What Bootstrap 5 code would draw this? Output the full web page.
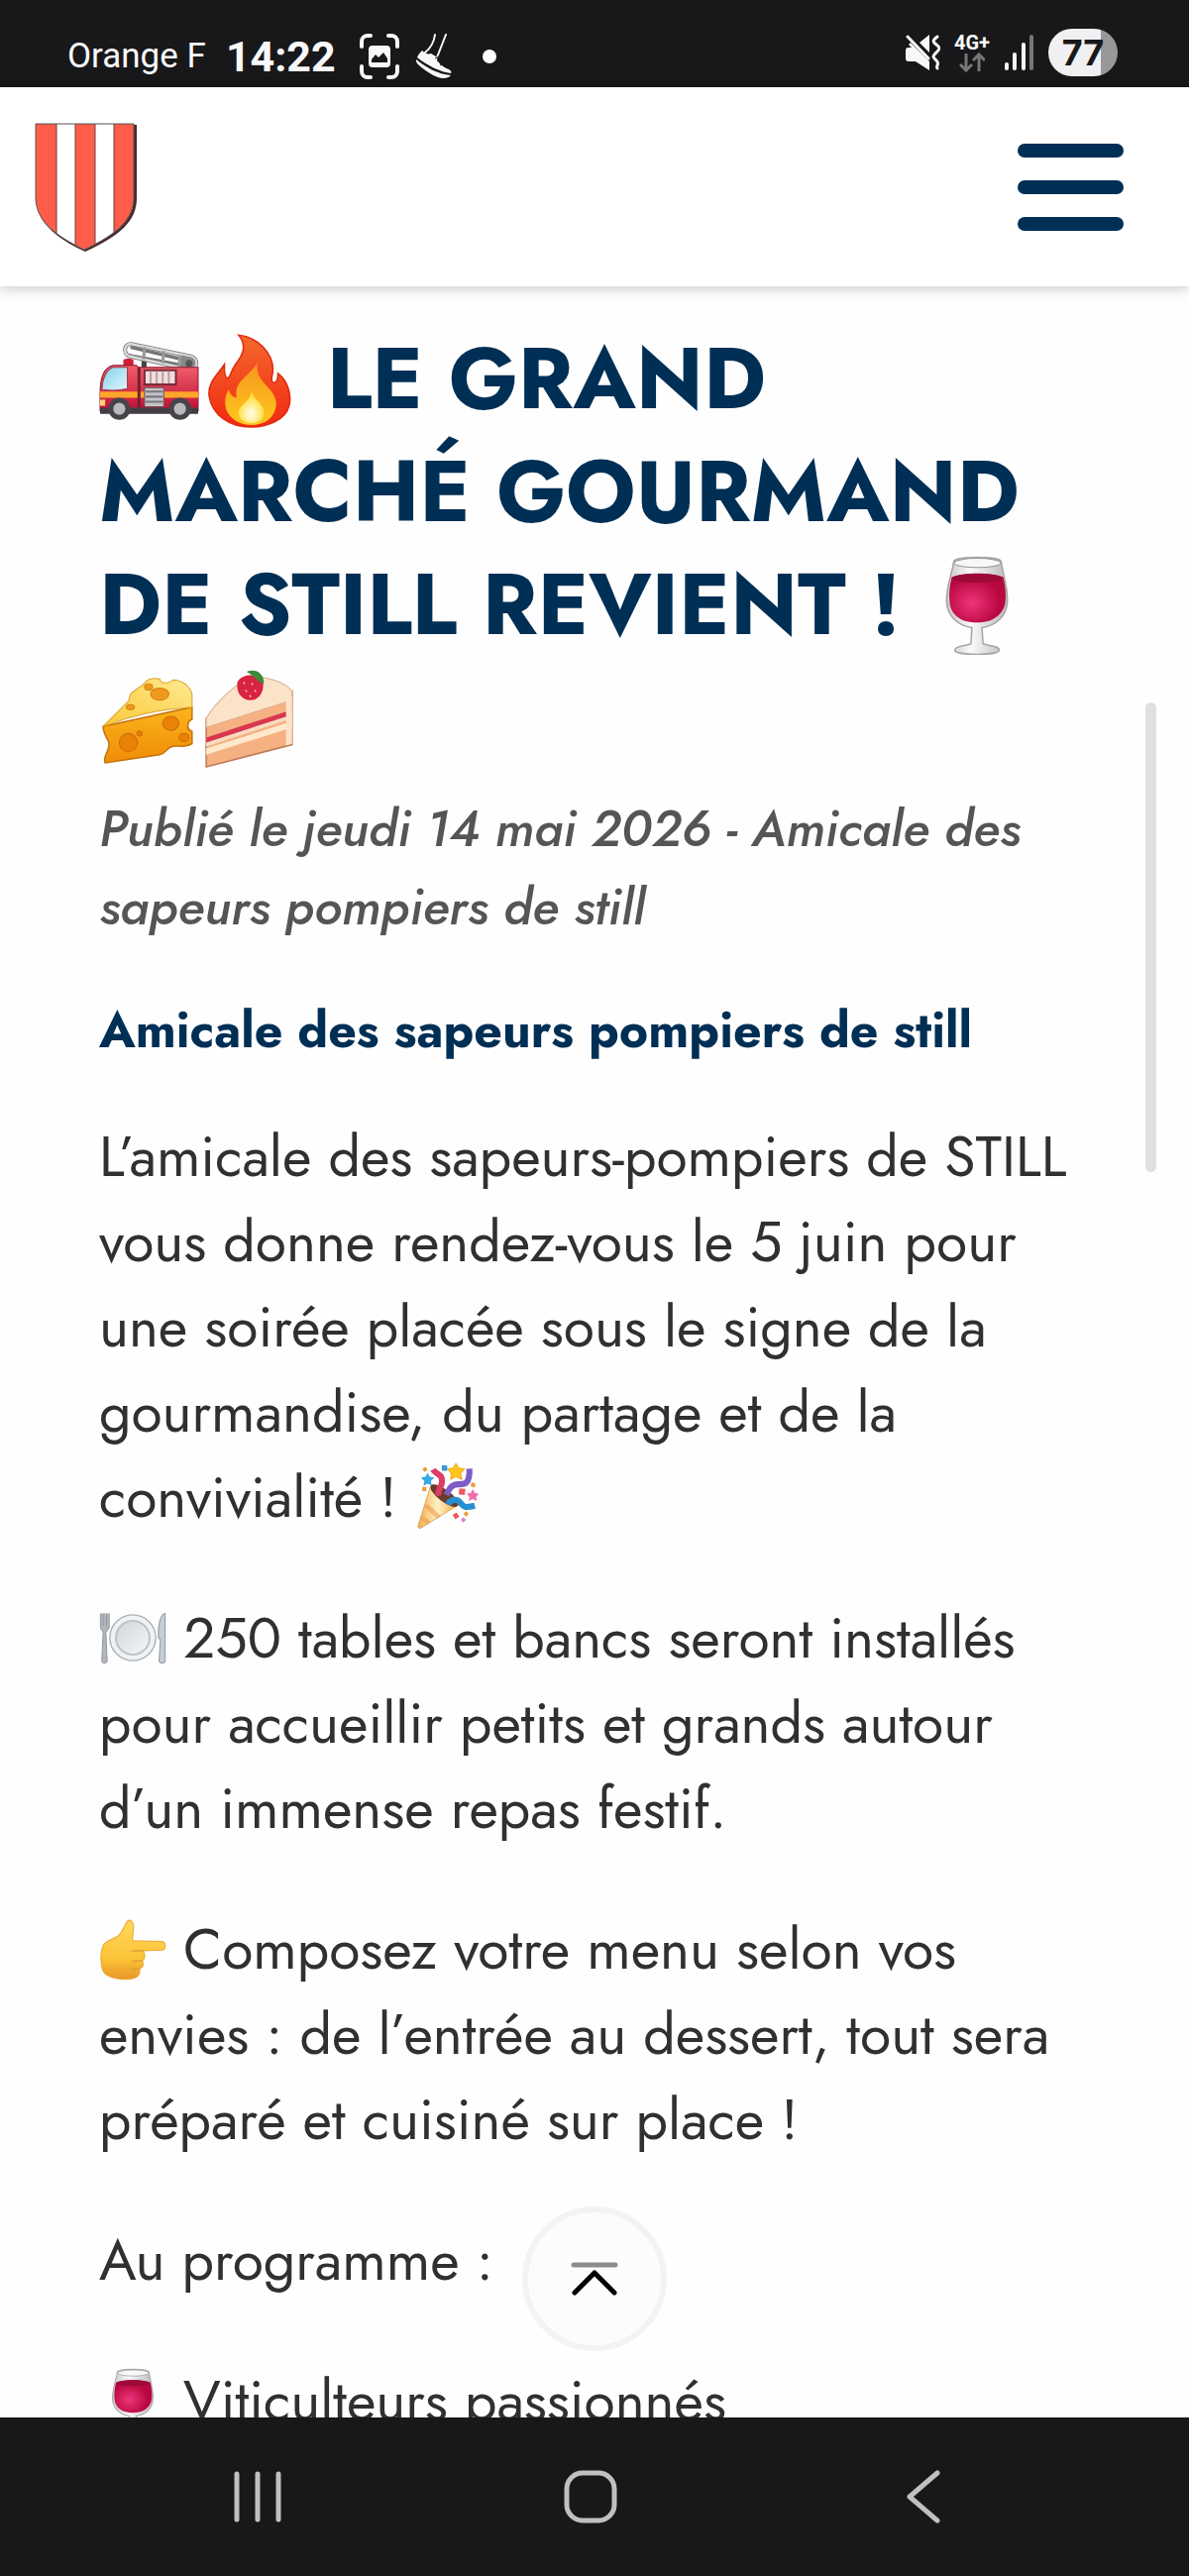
<!DOCTYPE html>
<html lang="fr">
<head>
<meta charset="utf-8">
<meta name="viewport" content="width=device-width, initial-scale=1">
<title>Le grand marché gourmand de Still revient</title>
<link href="https://cdn.jsdelivr.net/npm/bootstrap@5.3.0/dist/css/bootstrap.min.css" rel="stylesheet">
<style>
  :root { --navy: #002f55; --chrome: #18181a; }
  body { font-family: Jost, Lato, sans-serif; color: #303030; background: #fefefe; }
  svg { display: block; flex: none; }
  .status-bar { height: 88px; padding: 26px 72px 0 68px; background: var(--chrome); color: #f8f8fa; font-family: Roboto, sans-serif; }
  .status-bar .status-end { gap: 14px; }
  .carrier { font-size: 35px; line-height: 60px; }
  .clock { font-size: 43px; line-height: 60px; font-weight: 700; }
  .status-dot { width: 14px; height: 14px; margin-left: 30px; }
  .net-label { font: 700 20px/20px Roboto, sans-serif; }
  .battery { width: 70px; height: 48px; font: 700 36px/48px Inter, sans-serif; color: var(--chrome); background: linear-gradient(90deg, #f0f0f2 76%, #98989a 76%); }
  .site-header { height: 201px; padding: 0 66px 0 34px; box-shadow: 0 2px 12px rgba(0, 0, 0, .22); z-index: 2; }
  .burger { gap: 23px; width: 107px; }
  .burger span { height: 14px; border-radius: 7px; background: var(--navy); }
  .article { padding: 36px 100px 0; }
  .article h1 { font-size: 86px; line-height: 114px; font-weight: 700; color: var(--navy); margin-bottom: 16px; --emoji: 102px; --drop: -21px; }
  .article .meta { font-size: 51px; line-height: 79px; font-weight: 500; font-style: italic; color: #555; margin-bottom: 45px; }
  .article h2 { font-size: 50px; line-height: 79px; font-weight: 700; color: var(--navy); margin-bottom: 45px; }
  .article .body-text { font-size: 57px; line-height: 86px; margin-bottom: 56px; --emoji: 68px; --drop: -14px; }
  .emoji { display: inline-block; width: var(--emoji); height: var(--emoji); vertical-align: var(--drop); }
  .scroll-track { top: 420px; right: 33px; width: 11px; height: 474px; border-radius: 6px; background: #e0e0e0; }
  .to-top { bottom: 67px; width: 146px; height: 146px; border: 6px solid #f3f3f3; background: #fcfcfc; }
  .system-nav { height: 160px; padding-right: 8px; background: var(--chrome); }
  .system-nav button { width: 336px; }
</style>
<script src="https://cdn.jsdelivr.net/npm/bootstrap@5.3.0/dist/js/bootstrap.bundle.min.js"></script>
</head>
<body class="vh-100 d-flex flex-column overflow-hidden">

<svg class="position-absolute" width="0" height="0" aria-hidden="true">
  <defs>
    <linearGradient id="g-red" x2="0" y2="1"><stop stop-color="#f2606a"/><stop offset="1" stop-color="#c00d35"/></linearGradient>
    <linearGradient id="g-glass" x2="1" y2="1"><stop stop-color="#7fd3ea"/><stop offset="1" stop-color="#e2f6fb"/></linearGradient>
    <linearGradient id="g-fire" x2="0" y2="1"><stop stop-color="#f4682c"/><stop offset="1" stop-color="#f22a12"/></linearGradient>
    <linearGradient id="g-fire2" x2="0" y2="1"><stop stop-color="#f7961e"/><stop offset="1" stop-color="#ffc81e"/></linearGradient>
    <radialGradient id="g-fire3" cy=".7"><stop stop-color="#fffef0"/><stop offset="1" stop-color="#ffe04a"/></radialGradient>
    <radialGradient id="g-wine" cx=".4" cy=".6"><stop stop-color="#f0347c"/><stop offset="1" stop-color="#b8083f"/></radialGradient>
    <linearGradient id="g-clear"><stop stop-color="#c9c5ca"/><stop offset=".4" stop-color="#fafafa"/><stop offset="1" stop-color="#bcb8bd"/></linearGradient>
    <linearGradient id="g-cheese" x2="0" y2="1"><stop stop-color="#fbb41c"/><stop offset="1" stop-color="#f08c06"/></linearGradient>
    <linearGradient id="g-cheese2" x1="1" x2="0" y2="1"><stop stop-color="#ffe98e"/><stop offset="1" stop-color="#fbc93a"/></linearGradient>
    <linearGradient id="g-cone"><stop stop-color="#f4b04c"/><stop offset=".5" stop-color="#fff0c4"/><stop offset="1" stop-color="#efa545"/></linearGradient>
    <linearGradient id="g-plate" x2="1" y2="1"><stop stop-color="#cfd5da"/><stop offset="1" stop-color="#f6f9fa"/></linearGradient>
    <linearGradient id="g-hand" x2="0" y2="1"><stop stop-color="#ffd95c"/><stop offset=".65" stop-color="#fcc336"/><stop offset="1" stop-color="#e8962a"/></linearGradient>
  </defs>
  <symbol id="e-truck" viewBox="0 0 100 100">
    <path d="M42 42V32h5v10z" fill="#444"/>
    <path d="m31 19 60 14M28 27l60 11" stroke="#777" stroke-width="3.5" fill="none"/>
    <path d="M32 16 90 28c9 2 8 13-1 13L30 28c-7-3-5-13 2-12z" fill="none" stroke="#777" stroke-width="4"/>
    <path d="M32 16 90 28c9 2 8 13-1 13L30 28c-7-3-5-13 2-12z" fill="none" stroke="#d9d9d9" stroke-width="2.4"/>
    <path d="m45 19-1 12M64 23l-1 12M80 27l-1 12" stroke="#999" stroke-width="3"/>
    <path d="m82 27 9 2c6 2 6 11-1 12l-10-2z" fill="#888"/><circle cx="89" cy="35" r="3.5" fill="#555"/>
    <path d="M24 32c0-2 10-2 10 0v7H24zM83 40h12v4H83z" fill="#cf2033"/>
    <path d="M1 64c0-14 4-25 13-27h23l2 2h59v43H1z" fill="url(#g-red)" stroke="#8d1730"/>
    <path d="M3 61c0-10 4-20 11-22h14v21c-8 2-17 2-25 1z" fill="url(#g-glass)" stroke="#a3394b"/>
    <path d="M1 63h97v6H1z" fill="#ffa62a"/>
    <path d="M38 39h3v43h-3z" fill="#762030"/>
    <path d="M45 42h31v14H45z" fill="#f2dede" stroke="#7c2b3a" stroke-width="2"/>
    <path d="M51 43v12M57 43v12M63 43v12M69 43v12" stroke="#b7a1a4" stroke-width="2"/>
    <path d="M45 59h19v19H45z" fill="#c4c4c8" stroke="#6d4c55"/><path d="M46 63h17M46 68h17M46 73h17" stroke="#77777c" stroke-width="2"/>
    <path d="M1 79h97v6H1z" fill="#403d45"/><path d="M1 71h5v6H1z" fill="#ffd277"/>
    <g stroke="#46444a" stroke-width="5" fill="#b9b9be"><circle cx="20" cy="80" r="8.5"/><circle cx="80" cy="80" r="8.5"/></g>
  </symbol>
  <symbol id="e-fire" viewBox="0 0 100 100">
    <path d="M38 7c20 2 34 19 34 34 0 6-3 11 0 13 4 1 5-4 5-9 12 9 13 25 11 32-3 13-20 21-38 21-21 0-38-12-41-30-2-14 8-21 15-32 0 8 0 12 3 14 3-1 3-7 8-14 7-9 12-18 3-29z" fill="url(#g-fire)" stroke="#e02a10" stroke-width="1.5"/>
    <path d="M57 34c-3 13 6 20 12 27 8 9 7 17 4 23-4 8-12 12-23 12-13 0-24-9-25-19-1-7 1-12 3-16 2 4 3 7 8 8-3-17 12-20 21-35z" fill="url(#g-fire2)"/>
    <path d="M51 63c1 8 12 11 12 21 0 6-6 10-12 10-7 0-13-4-13-10 0-8 11-10 13-21z" fill="url(#g-fire3)"/>
  </symbol>
  <symbol id="e-wine" viewBox="0 0 100 100">
    <path d="M27 8c0-6 47-6 47 0 2 13 7 27 6 40-1 14-11 23-25 25l1 16c5 2 16 2 16 6 0 6-44 6-44 0 0-4 12-4 16-6l1-16C31 71 21 62 20 48c-1-13 5-27 7-40z" fill="url(#g-clear)" stroke="#aaa4a9" stroke-width="1.5"/>
    <path d="M25 23c13-5 38-5 51 0 2 9 3 17 2 25-2 12-12 20-28 20S24 60 23 48c-1-8 0-16 2-25z" fill="url(#g-wine)"/>
    <ellipse cx="50.500" cy="24" rx="25" ry="4.500" fill="#9c0b38"/>
    <ellipse cx="50.500" cy="9" rx="23" ry="4.500" fill="#f8f8f8" stroke="#999"/>
  </symbol>
  <symbol id="e-cheese" viewBox="0 0 100 100">
    <path d="M4 59 92 40v12c-5 2-6 10 0 12v12c-8 5-14 1-20 3-6 2-6 7-12 8L6 95c-3-8 7-13 3-22-2-4-5-8-5-14z" fill="url(#g-cheese)" stroke="#c4730c" stroke-width="1.500"/>
    <path d="M4 59 28 35c3-1 1-7 4-9l11-8c4-3 5-8 17-6 0 6 11 4 13 1 10 0 17 7 19 14v13C60 42 30 49 4 59z" fill="url(#g-cheese2)" stroke="#d9a32a"/>
    <g fill="#f09a1c" stroke="#cf7d10"><ellipse cx="60" cy="27" rx="9" ry="6"/><ellipse cx="49" cy="20" rx="4" ry="3"/><ellipse cx="31" cy="40" rx="4" ry="2.500"/></g>
    <g fill="#ea8208" stroke="#c86c08"><ellipse cx="29" cy="75" rx="9" ry="9"/><ellipse cx="71" cy="56" rx="8" ry="7"/><ellipse cx="84" cy="70" rx="5" ry="4"/><circle cx="40" cy="66" r="2.500"/></g>
  </symbol>
  <symbol id="e-cake" viewBox="0 0 100 100">
    <path d="M6 51 91 24v53L6 99z" fill="#f6b183" stroke="#c07a58" stroke-width="1.500"/>
    <path d="M6 51C14 37 35 16 52 9c18 2 33 7 39 15v9L6 60z" fill="#fbe3c8" stroke="#dbb092"/>
    <path d="m6 71 85-27v7L6 79z" fill="#f9dcc2"/><path d="m6 70 80-26v5L6 75z" fill="#d9364f"/>
    <path d="m6 81 85-27v6L6 87z" fill="#ffe9cc"/><path d="M85 34c2-3 6-4 6-4v46l-6 2z" fill="#fbe3c8"/>
    <path d="M37 15c5-10 22-8 25 0 2 9-4 18-12 18-9 0-15-8-13-18z" fill="#d92343"/>
    <path d="M46 5c8-4 18 1 17 12-5-1-8-7-17-12z" fill="#3d8a3a"/>
    <path d="m43 15 1 2m7-1 1 2m-7 5 1 2m8-2 1 2m-6 3 1 2" stroke="#ffb0a8" stroke-width="1.500"/>
  </symbol>
  <symbol id="e-party" viewBox="0 0 100 100">
    <path d="M25 32c12 1 32 14 40 30L10 96c-3 1-5-1-4-4z" fill="url(#g-cone)" stroke="#cf8c3a"/>
    <path d="m17 62 20 18M11 80l11 9" stroke="#ef9e50" stroke-width="7" opacity=".6"/>
    <ellipse cx="45" cy="48" rx="25" ry="9" transform="rotate(37 45 48)" fill="#6d3a2a"/>
    <path d="M36 48c-2-12 10-16 4-28-3-5-9-5-12-11" fill="none" stroke="#dc3f66" stroke-width="9"/>
    <path d="M48 47c4-10 8-16 17-16 8 0 18 2 17-23" fill="none" stroke="#7e5cc8" stroke-width="9"/>
    <path d="M50 61c4-8 14-9 18-3 6 8 9 8 22 5" fill="none" stroke="#268fd0" stroke-width="9"/>
    <path id="star" d="m62-1 4 8 9 1-6 7 2 9-9-4-8 4 1-9-6-7 9-1z" fill="#ffc41c" stroke="#dd9710"/>
    <path d="m20 14 3 6 7 1-5 5 1 7-6-3-6 3 1-7-5-5 7-1z" fill="#36a8e6"/>
    <path d="m87 38 3 6 6 1-4 5 1 6-6-3-6 3 1-6-4-5 6-1z" fill="#ee70ae"/>
    <path d="m67 37 9 1-1 9-9-1zM57 76l6-3 4 6-6 4z" fill="#ea5a5c"/><path d="M41 3h8v8h-8z" fill="#3896d8"/>
    <path d="m16 5 4 4-4 4-4-4zM12 35h6v6h-6zM85 28l6 2-1 6-6-2zM77 71l4 4-4 4-4-4z" fill="#f19b35"/><path d="m73 80 4 4-4 4-4-4z" fill="#d781d4"/>
  </symbol>
  <symbol id="e-plate" viewBox="0 0 100 100">
    <circle cx="50" cy="50" r="34" fill="#f0f3f5" stroke="#a8b0b8" stroke-width="2"/>
    <circle cx="50" cy="50" r="25" fill="url(#g-plate)" stroke="#bcc5cb" stroke-width="3"/>
    <path d="M2 14v20c0 4 3 5 4 8L4 84c0 5 8 5 8 0l-2-42c1-3 5-4 5-8V14M6 14v19M11 14v19" fill="#b1b6bc" stroke="#979ca2" stroke-width="1.500"/>
    <path d="M98 14c-7 1-11 18-10 36l3 3-2 31c0 5 9 5 9 0z" fill="#c8cdd2" stroke="#92979d" stroke-width="1.500"/>
  </symbol>
  <symbol id="e-hand" viewBox="0 0 100 100">
    <path d="M42 9c4-4 9 1 9 8 0 8-2 15-1 21l43 1c7 1 7 12 0 13l-28 1c4 5 4 11-1 15 3 5 1 10-4 12 2 7-3 13-10 14-14 3-34 0-42-8C2 79 1 57 6 45c5-9 18-9 25-17 5-6 7-14 11-19z" fill="url(#g-hand)" stroke="#eaa52d" stroke-width="1.500"/>
    <path d="M65 53H49M64 68H50M60 80H48" stroke="#dda02f" stroke-width="2" stroke-linecap="round"/>
  </symbol>
</svg>

<div class="status-bar d-flex justify-content-between flex-shrink-0">
  <div class="d-flex align-items-center">
    <span class="carrier me-3">Orange F</span>
    <span class="clock ms-1">14:22</span>
    <svg class="ms-4" width="40" height="46" viewBox="0 0 40 46" fill="none" aria-hidden="true">
      <path d="M2 13V8a6 6 0 0 1 6-6h3M29 2h3a6 6 0 0 1 6 6v5M38 33v5a6 6 0 0 1-6 6h-3M11 44H8a6 6 0 0 1-6-6v-5" stroke="#f8f8fa" stroke-width="4" stroke-linecap="round"/>
      <rect x="9" y="12" width="22" height="22" rx="4" fill="#f8f8fa"/>
      <path d="M12 29v-3l4-5 3 3 5-5 4 6v4z" fill="#18181a"/>
    </svg>
    <svg class="ms-3" width="38" height="46" viewBox="0 0 38 46" aria-hidden="true">
      <path d="M20 1c-1 8-5 14-10 18M31 1l-9 23" fill="none" stroke="#f8f8fa" stroke-width="2" stroke-linecap="round"/>
      <path d="M7 17c3 3 6 4 9 3l5 3c2 8 8 11 13 13 2 1 3 3 2 4-10-1-24-8-34-16 1-3 3-5 5-7z" fill="#f8f8fa"/>
      <path d="M1 26c10 8 22 15 35 16-2 3-8 4-13 2C15 41 7 35 2 30c-1-1-1-3-1-4z" fill="#f8f8fa"/>
      <path d="m20 25 4-2m-2 5 4-2m-1 6 4-2" stroke="#18181a" stroke-width="1"/>
    </svg>
    <span class="status-dot bg-white rounded-circle"></span>
  </div>
  <div class="status-end d-flex align-items-center pb-2">
    <svg width="36" height="38" viewBox="0 0 36 38" fill="#f8f8fa" aria-hidden="true">
      <path d="M3 14h4l-3-3 2-2 19 19v9L11 28H4a3 3 0 0 1-3-3v-8a3 3 0 0 1 2-3zM15 9l10-8v18z"/>
      <path d="m3 3 21 22M33 3c-5 4-5 5-1 8s4 4 0 8-4 4 0 8-1 5 1 8" fill="none" stroke="#f8f8fa" stroke-width="3" stroke-linecap="round"/>
    </svg>
    <div class="d-flex flex-column align-items-center">
      <span class="net-label">4G+</span>
      <svg width="26" height="20" viewBox="0 0 26 20" fill="none" stroke="#77777a" stroke-width="3" aria-hidden="true">
        <path d="M7 1v16M1 12l6 6 6-6M20 19V3M14 8l6-6 6 6"/>
      </svg>
    </div>
    <svg width="31" height="38" viewBox="0 0 31 38" stroke-width="4" stroke-linecap="round" aria-hidden="true">
      <path d="M3 31v4M11 21v14M20 11v24" stroke="#f8f8fa"/><path d="M28 3v32" stroke="#77777a"/>
    </svg>
    <span class="battery rounded-pill text-center">77</span>
  </div>
</div>

<header class="site-header bg-white d-flex align-items-center justify-content-between flex-shrink-0 position-relative">
  <a href="#" aria-label="Accueil">
    <svg width="106" height="132" viewBox="0 0 106 132" aria-hidden="true">
      <defs><clipPath id="shield"><path d="M2 2h99v74c0 22-16 37-50 53C18 113 2 98 2 76z"/></clipPath></defs>
      <path d="M4 3h100v74c0 23-17 38-52 54C30 121 14 109 7 96z" fill="#4a2b2b"/>
      <g clip-path="url(#shield)">
        <path fill="#fff" d="M0 0h106v132H0z"/>
        <path fill="#ff5d49" stroke="#713c3a" d="M-2 0h25v132H-2zM42 0h20v132H42zM81 0h24v132H81z"/>
      </g>
      <path d="M2 2h99v74c0 22-16 37-50 53C18 113 2 98 2 76z" fill="none" stroke="#555"/>
    </svg>
  </a>
  <button type="button" class="burger btn border-0 p-0 d-flex flex-column align-items-stretch" aria-label="Menu"><span></span><span></span><span></span></button>
</header>

<div class="flex-fill position-relative overflow-hidden">
  <article class="article">
    <h1><svg class="emoji" role="img" aria-label="🚒"><use href="#e-truck"/></svg><svg class="emoji" role="img" aria-label="🔥"><use href="#e-fire"/></svg> LE GRAND MARCHÉ GOURMAND DE STILL REVIENT ! <svg class="emoji" role="img" aria-label="🍷"><use href="#e-wine"/></svg> <svg class="emoji" role="img" aria-label="🧀"><use href="#e-cheese"/></svg><svg class="emoji" role="img" aria-label="🍰"><use href="#e-cake"/></svg></h1>
    <p class="meta">Publié le jeudi 14 mai 2026 - Amicale des sapeurs pompiers de still</p>
    <h2>Amicale des sapeurs pompiers de still</h2>
    <p class="body-text">L’amicale des sapeurs-pompiers de STILL vous donne rendez-vous le 5 juin pour une soirée placée sous le signe de la gourmandise, du partage et de la convivialité ! <svg class="emoji" role="img" aria-label="🎉"><use href="#e-party"/></svg></p>
    <p class="body-text"><svg class="emoji" role="img" aria-label="🍽️"><use href="#e-plate"/></svg> 250 tables et bancs seront installés pour accueillir petits et grands autour d’un immense repas festif.</p>
    <p class="body-text"><svg class="emoji" role="img" aria-label="👉"><use href="#e-hand"/></svg> Composez votre menu selon vos envies : de l’entrée au dessert, tout sera préparé et cuisiné sur place !</p>
    <p class="body-text">Au programme :</p>
    <p class="body-text"><svg class="emoji" role="img" aria-label="🍷"><use href="#e-wine"/></svg> Viticulteurs passionnés</p>
  </article>
  <div class="scroll-track position-absolute"></div>
  <button type="button" class="to-top btn rounded-circle p-0 position-absolute start-50 translate-middle-x d-flex align-items-center justify-content-center" aria-label="Haut de page">
    <svg width="48" height="34" viewBox="0 0 48 34" fill="none" stroke-linecap="round" stroke-linejoin="round" aria-hidden="true">
      <path d="M3 3h42" stroke="#8c8c8c" stroke-width="5"/><path d="M4 31 24 11l20 20" stroke="#000" stroke-width="5"/>
    </svg>
  </button>
</div>

<nav class="system-nav d-flex justify-content-center flex-shrink-0" aria-label="Système">
  <button type="button" class="btn border-0 p-0 d-flex align-items-center justify-content-center" aria-label="Applications récentes">
    <svg width="50" height="54" viewBox="0 0 50 54" stroke="#c0c0c2" stroke-width="5" stroke-linecap="round" aria-hidden="true"><path d="M4 4v46M25 4v46M46 4v46"/></svg>
  </button>
  <button type="button" class="btn border-0 p-0 d-flex align-items-center justify-content-center" aria-label="Accueil">
    <svg width="56" height="56" viewBox="0 0 56 56" fill="none" stroke="#c0c0c2" stroke-width="5" aria-hidden="true"><rect x="4" y="4" width="48" height="48" rx="16"/></svg>
  </button>
  <button type="button" class="btn border-0 p-0 d-flex align-items-center justify-content-center" aria-label="Retour">
    <svg width="36" height="56" viewBox="0 0 36 56" fill="none" stroke="#c0c0c2" stroke-width="5" stroke-linecap="round" stroke-linejoin="round" aria-hidden="true"><path d="M32 4 4 28l28 24"/></svg>
  </button>
</nav>
</body>
</html>
